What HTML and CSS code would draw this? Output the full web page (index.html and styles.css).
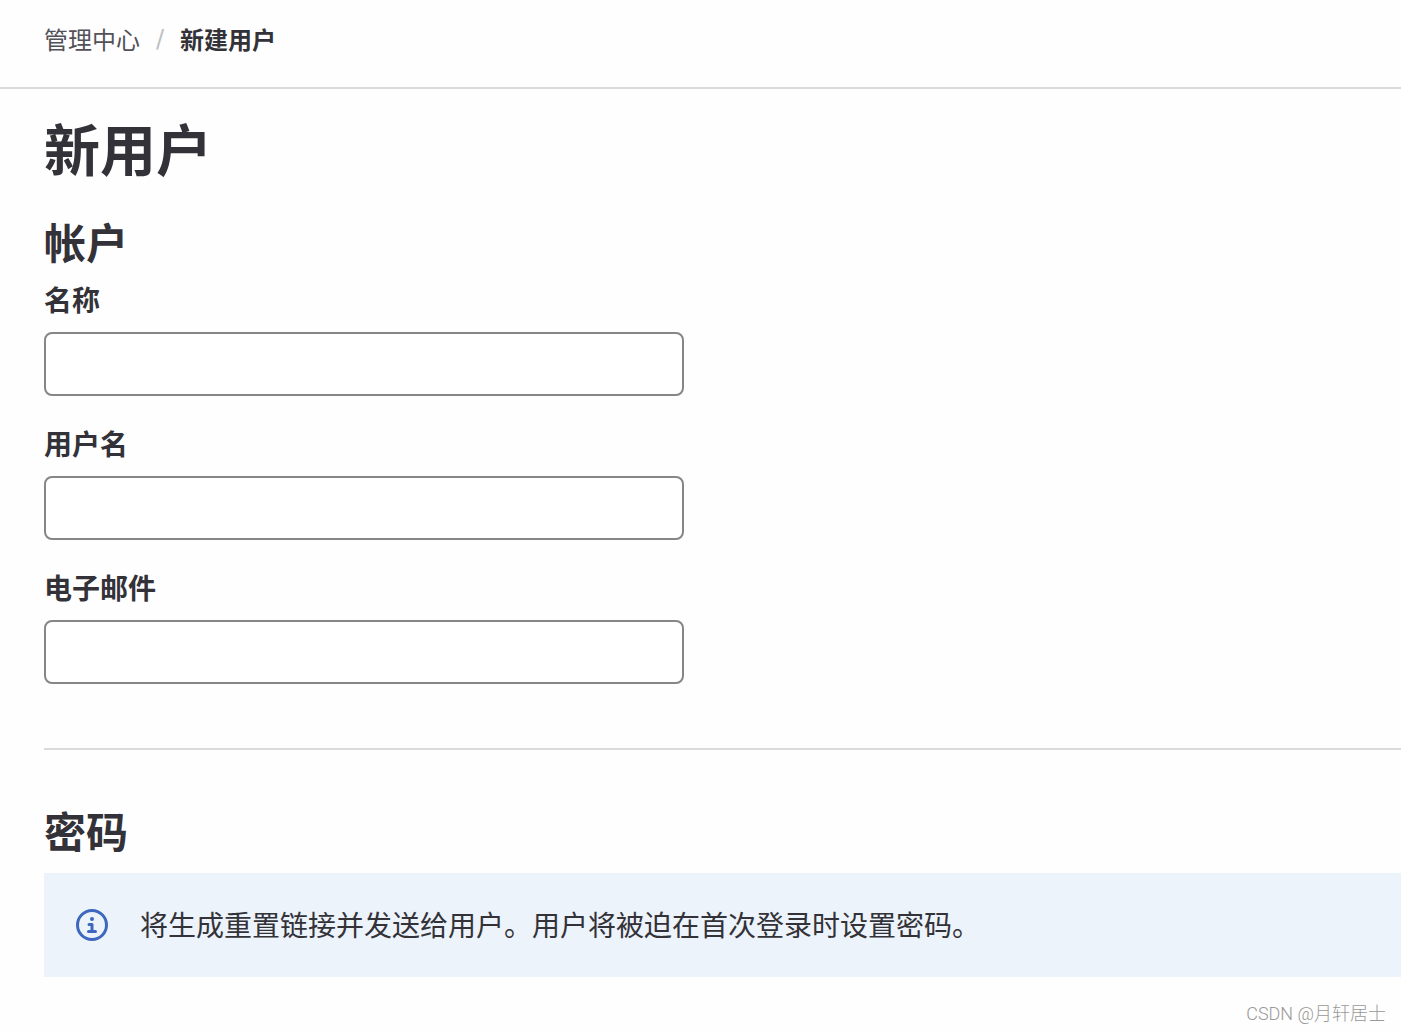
FILE: index.html
```html
<!DOCTYPE html>
<html lang="zh-CN">
<head>
<meta charset="utf-8">
<title>新建用户</title>
<link rel="stylesheet" href="styles.css">
</head>
<body>
<header class="top-bar">
  <nav class="breadcrumbs" aria-label="Breadcrumbs">
    <a class="crumb" href="#">管理中心</a>
    <span class="separator">/</span>
    <a class="crumb current" href="#">新建用户</a>
  </nav>
</header>
<main class="content">
  <h1 class="page-title">新用户</h1>
  <form class="user-form">
    <section class="account">
      <h2 class="section-title">帐户</h2>
      <div class="field">
        <label for="name">名称</label>
        <input id="name" type="text">
      </div>
      <div class="field">
        <label for="username">用户名</label>
        <input id="username" type="text">
      </div>
      <div class="field">
        <label for="email">电子邮件</label>
        <input id="email" type="email">
      </div>
    </section>
    <section class="password">
      <h2 class="section-title">密码</h2>
      <div class="alert">
        <svg class="alert-icon" viewBox="0 0 32 32" aria-hidden="true">
          <circle cx="16" cy="16" r="14.5" fill="none" stroke="currentColor" stroke-width="3"/>
          <circle cx="16" cy="10" r="2" fill="currentColor"/>
          <path d="M13 15.5H16V22M12.5 22.5H19.5" fill="none" stroke="currentColor" stroke-width="3" stroke-linecap="round" stroke-linejoin="round"/>
        </svg>
        <p class="alert-text">将生成重置链接并发送给用户。用户将被迫在首次登录时设置密码。</p>
      </div>
    </section>
  </form>
</main>
<footer class="credit">CSDN @月轩居士</footer>
</body>
</html>
```
FILE: styles.css
```css
* {
  box-sizing: border-box;
}

body {
  margin: 0;
  background: #fefefe;
  color: #333238;
  font-family: "Noto Sans", "Noto Sans CJK SC", sans-serif;
  font-size: 28px;
}

.top-bar {
  padding: 22px 44px 30px;
  border-bottom: 2px solid #dbdbdb;
}

.breadcrumbs {
  display: flex;
  gap: 16px;
  font-size: 24px;
  line-height: 35px;
}

.crumb {
  color: #535158;
  text-decoration: none;
}

.current {
  color: #333238;
  font-weight: 700;
}

.separator {
  color: #bfbfc3;
  font-family: "DejaVu Sans", sans-serif;
}

.content {
  padding-left: 44px;
}

.page-title {
  margin: 0;
  padding: 22px 0 24px;
  font-size: 56px;
  font-weight: 700;
  line-height: 76px;
}

.section-title {
  margin: 0;
  padding-bottom: 9px;
  font-size: 42px;
  line-height: 64px;
}

.account {
  padding-bottom: 32px;
  border-bottom: 2px solid #dbdbdb;
}

.field {
  width: 640px;
  max-width: 100%;
  margin-bottom: 32px;
}

.field label {
  display: block;
  padding-bottom: 16px;
  font-weight: 700;
  line-height: 32px;
}

.field input {
  display: block;
  width: 100%;
  height: 64px;
  padding: 16px 24px;
  border: 2px solid #868686;
  border-radius: 8px;
  background: #fff;
  color: inherit;
  font: inherit;
}

.password {
  padding-top: 50px;
}

.alert {
  display: flex;
  align-items: center;
  gap: 32px;
  padding: 32px;
  background: #ecf3fa;
}

.alert-icon {
  flex: none;
  width: 32px;
  height: 32px;
  color: #3d68be;
}

.alert-text {
  margin: 0;
  line-height: 40px;
}

.credit {
  padding: 24px 15px 4px;
  color: #999;
  font-family: Roboto, "Noto Sans CJK SC", sans-serif;
  font-size: 18px;
  font-weight: 300;
  line-height: 26px;
  text-align: right;
}
```
